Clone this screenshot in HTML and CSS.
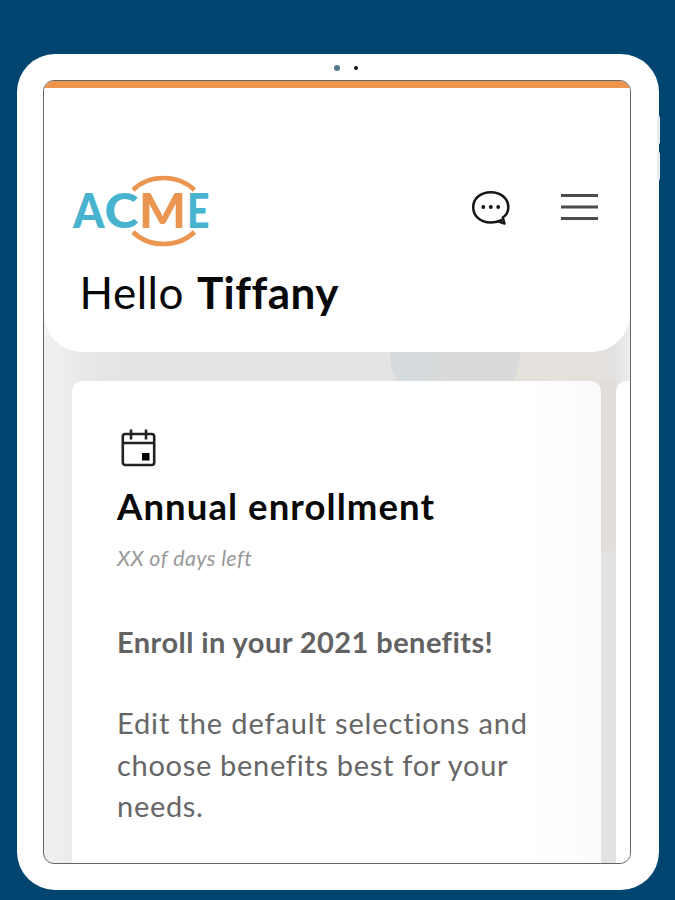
FILE: index.html
```
<!DOCTYPE html>
<html lang="en">
<head>
<meta charset="utf-8">
<title>Acme benefits</title>
<link rel="stylesheet" href="styles.css">
</head>
<body>
<div class="tablet">
  <span class="tablet-button tablet-button-up"></span>
  <span class="tablet-button tablet-button-down"></span>
  <div class="cameras"><i class="lens"></i><i class="sensor"></i></div>
  <div class="screen">
    <header class="header">
      <div class="bar">
        <svg class="logo" width="140" height="74" viewBox="0 0 140 74" role="img" aria-label="ACME">
          <g fill="none" stroke="#ea9650" stroke-width="4.600">
            <path d="M60 16C76 0 105 0 121.500 16"/>
            <path d="M60 58C76 74 105 74 121.500 58"/>
          </g>
          <g class="logo-text">
            <text x="0" y="54" textLength="31.500" lengthAdjust="spacingAndGlyphs">A</text>
            <text x="31.500" y="54" textLength="34" lengthAdjust="spacingAndGlyphs">C</text>
            <text class="logo-accent" x="66" y="54" textLength="47" lengthAdjust="spacingAndGlyphs">M</text>
            <text x="114" y="54" textLength="22.500" lengthAdjust="spacingAndGlyphs">E</text>
          </g>
        </svg>
        <nav class="actions">
          <svg width="40" height="36" viewBox="0 0 40 36">
            <path d="M31 29.500C27.500 31.800 23.500 32.500 19.500 32.500C9.500 32.500 2.200 26 2.200 17.200C2.200 8.500 9.500 2.200 19.800 2.200C30 2.200 37.300 8.500 37.300 17.200C37.300 21.500 35.500 25 31.800 27.500L33.500 33.500L27 31.200" fill="none" stroke="#161616" stroke-width="2.500" stroke-linejoin="round"/>
            <g fill="#111"><circle cx="12.300" cy="17" r="1.900"/><circle cx="19.800" cy="17" r="1.900"/><circle cx="27.200" cy="17" r="1.900"/></g>
          </svg>
          <svg width="37" height="36" viewBox="0 0 37 36">
            <path d="M0 5.500H37M0 17H37M0 28.500H37" stroke="#4b4b4b" stroke-width="2.800"/>
          </svg>
        </nav>
      </div>
      <h1 class="greeting"><span class="hello">Hello</span> <b class="name">Tiffany</b></h1>
    </header>
    <main class="cards">
      <article class="card">
        <svg class="calendar" width="36" height="40" viewBox="0 0 36 40">
          <g fill="none" stroke="#222" stroke-width="2.600">
            <rect x="2.800" y="6" width="31.400" height="31" rx="2.500"/>
            <path d="M2.500 15H34.500M11 1.500V11.500M26 1.500V11.500"/>
          </g>
          <path d="M22 25H29.500V32.500H22Z" fill="#000"/>
        </svg>
        <h2 class="title">Annual enrollment</h2>
        <p class="days">XX of days left</p>
        <p class="lead">Enroll in your 2021 benefits!</p>
        <p class="text"><span class="line-first">Edit the default selections and</span><br>choose benefits best for your<br>needs.</p>
      </article>
      <article class="card card-next"></article>
    </main>
  </div>
</div>
</body>
</html>
```
FILE: styles.css
```
* { box-sizing: border-box; }
body {
  margin: 0;
  height: 900px;
  padding: 54px 16px 10px 17px;
  overflow: hidden;
  background: #00456f;
  font-family: Lato, "Liberation Sans", sans-serif;
  font-variant-ligatures: none;
}
h1, h2, p { margin: 0; white-space: nowrap; }
svg { display: block; overflow: visible; }
.tablet {
  position: relative;
  height: 836px;
  padding: 0 28px 0 26px;
  background: #fff;
  border-radius: 38px;
}
.tablet-button {
  position: absolute;
  right: -1px;
  width: 3px;
  height: 28px;
  border-radius: 2px;
  background: #e3edf3;
}
.tablet-button-up { top: 62px; }
.tablet-button-down { top: 98px; }
.cameras {
  display: flex;
  align-items: center;
  gap: 14px;
  height: 26px;
  padding: 2px 0 0 291px;
}
.lens { width: 6px; height: 6px; border-radius: 50%; background: #54798f; }
.sensor { width: 4px; height: 4px; border-radius: 50%; background: #111; }
.screen {
  height: 784px;
  border: 1px solid #666;
  border-radius: 11px;
  overflow: hidden;
  background:
    linear-gradient(90deg, transparent 555px, #e0d8d377 556px) 0 300px / 100% 170px no-repeat,
    radial-gradient(circle at 371px 275px, #d5dadc 0, transparent 75px) 346px 0 / 130px 330px no-repeat,
    radial-gradient(circle at 411px 270px, #dadada 0 65px, transparent 66px),
    linear-gradient(90deg, transparent 474px, #e4e0dc 476px 545px, transparent 582px) 0 0 / 100% 310px no-repeat,
    linear-gradient(90deg, #f1f1f1, #e5e5e5 60px, #e2e2e2 570px, #ededed);
  background:
    linear-gradient(90deg, transparent 555px, #e0d8d377 556px) 0 300px / 100% 170px no-repeat,
    radial-gradient(circle at 65px 270px, transparent 65px, #e4e4e4 66px) 346px 0 / 65px 330px no-repeat,
    radial-gradient(circle at 0 270px, transparent 65px, #e4e0dc 66px) 411px 0 / 68px 330px no-repeat,
    linear-gradient(90deg, #d5dbde, #dadada 80px) 346px 0 / 133px 330px no-repeat,
    linear-gradient(90deg, transparent 478px, #e4e0dc 479px 545px, transparent 582px) 0 0 / 100% 310px no-repeat,
    linear-gradient(90deg, #f1f1f1, #e5e5e5 60px, #e2e2e2 570px, #ededed);
}
.header {
  height: 271px;
  padding: 0 32px 0 29px;
  border-top: 7px solid #ed954d;
  border-radius: 0 0 38px 38px;
  background: #fff;
}
.bar {
  display: flex;
  justify-content: space-between;
  align-items: flex-start;
  height: 178px;
  padding-top: 86px;
}
.logo-text { fill: #48b3cf; font-size: 48px; font-weight: 900; }
.logo-accent { fill: #ea9650; }
.actions { display: flex; gap: 50px; padding-top: 16px; }
.greeting {
  display: flex;
  gap: 13px;
  padding-left: 6.500px;
  font-size: 44px;
  line-height: 52px;
  font-weight: 400;
  color: #080808;
}
.hello { letter-spacing: 0.500px; }
.name { font-weight: 700; letter-spacing: 0.500px; }
.cards { display: flex; gap: 15px; padding: 29px 0 0 28px; }
.card {
  flex: none;
  width: 529px;
  height: 500px;
  padding: 47px 45px;
  border-radius: 10px;
  background: linear-gradient(90deg, #fff 85%, #fbfbfb);
}
.card-next { background: #fff; }
.calendar { margin-left: 3px; }
.title {
  margin-top: 17px;
  font-size: 36.500px;
  line-height: 42px;
  font-weight: 700;
  letter-spacing: 1.080px;
  color: #080808;
}
.days {
  margin-top: 17.500px;
  font-size: 21.500px;
  line-height: 26px;
  font-style: italic;
  letter-spacing: 0.380px;
  color: #999;
}
.lead {
  margin-top: 50.500px;
  font-size: 29px;
  line-height: 41.500px;
  font-weight: 700;
  letter-spacing: 0.430px;
  color: #626262;
}
.text {
  margin-top: 39.500px;
  font-size: 29px;
  line-height: 41.500px;
  letter-spacing: 0.700px;
  color: #666;
}
.line-first { letter-spacing: 0.870px; }
```
